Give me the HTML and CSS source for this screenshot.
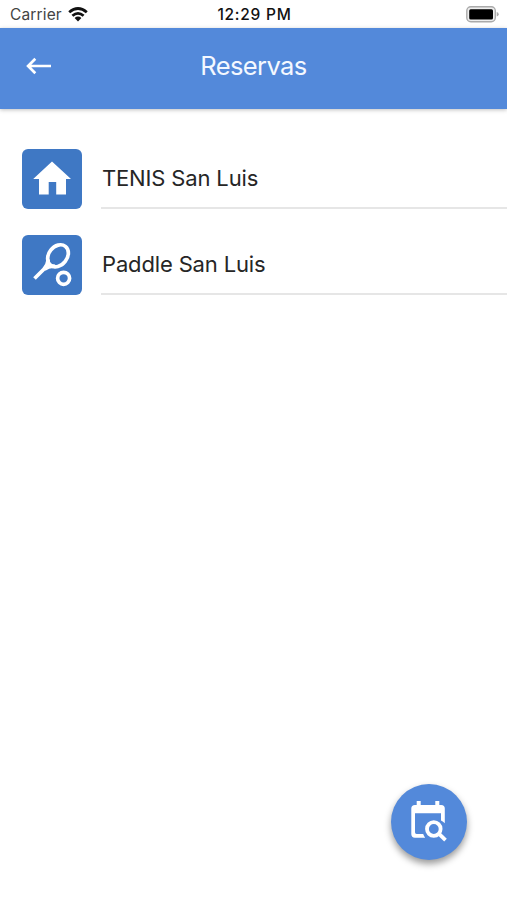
FILE: index.html
```html
<!DOCTYPE html>
<html lang="es">
<head>
<meta charset="utf-8">
<title>Reservas</title>
<link rel="stylesheet" href="styles.css">
</head>
<body>
<div class="screen">
  <div class="status">
    <div class="carrier"><span class="carrier-name">Carrier</span>
      <svg class="wifi" width="20" height="15" viewBox="0 0 20 15"><g fill="none" stroke="#111" stroke-width="2.8"><path d="M1.2 5.3Q10-2.3 18.8 5.3"/><path d="M4.4 8.8Q10 4 15.6 8.8"/></g><path fill="#111" d="M6.6 11Q10 8.2 13.4 11L10 14.4Z"/></svg>
    </div>
    <div class="time">12:29 PM</div>
    <svg class="battery" width="33" height="17" viewBox="0 0 33 17"><rect x=".8" y=".8" width="28.5" height="15" rx="4" fill="#eee" stroke="#aaa" stroke-width="1.4"/><rect x="3.2" y="3.2" width="23.8" height="10.2" rx="1.5" fill="#000"/><path fill="#aaa" d="M30.7 6q2 .5 2 2.3t-2 2.3z"/></svg>
  </div>
  <header class="header">
    <svg class="back" width="26" height="18" viewBox="0 0 26 18" fill="none" stroke="#fff" stroke-width="2.7"><path d="M25 9H2.5M9.3 1.8L2.1 9l7.2 7.2"/></svg>
    <h1 class="title">Reservas</h1>
  </header>
  <main class="list">
    <div class="row">
      <svg class="tile" viewBox="0 0 60 60"><path fill="#fff" d="M30 12.5L49 30h-5v15.5h-9.8V33h-7.5v12.5H17V30h-5.8Z"/></svg>
      <div class="label">TENIS San Luis</div>
    </div>
    <div class="row">
      <svg class="tile" viewBox="0 0 60 60"><g fill="none" stroke="#fff" stroke-width="3.7"><ellipse cx="36" cy="20.8" rx="9.2" ry="12" transform="rotate(38 36 20.8)"/><path d="M26.3 24.5Q25.5 30.5 21.8 34.2L12.5 43.5M33 31.3Q27 30.7 22.3 34.3"/><circle cx="41.6" cy="43.3" r="6"/></g></svg>
      <div class="label">Paddle San Luis</div>
    </div>
  </main>
  <button class="fab" aria-label="Buscar reservas">
    <svg width="76" height="76" viewBox="0 0 76 76"><path fill="#fff" d="M25.7 17h4v4h14.6v-4h4v4h1.9q3.6 0 3.6 3.6v14.7q-1.6-1.8-3.8-2.8v-7.2H24v19q0 1.6 1.6 1.6h6.6q.7 2 2 3.8H24q-3.7 0-3.7-3.7V24.6Q20.3 21 24 21h1.7Z"/><g fill="none" stroke="#fff"><circle cx="42.8" cy="45" r="6.8" stroke-width="3.8"/><path d="M47.3 49.2l7.2 6.9" stroke-width="3.8"/></g></svg>
  </button>
</div>
</body>
</html>
```
FILE: styles.css
```css
* { box-sizing: border-box; }
body { margin: 0; background: #fff; font-family: Inter, "Liberation Sans", sans-serif; color: #262626; }
.screen { height: 900px; display: flex; flex-direction: column; overflow: hidden; }
.status { height: 28px; flex: none; display: grid; grid-template-columns: 1fr auto 1fr; align-items: center; padding: 0 8px 0 10px; }
.carrier { display: flex; align-items: center; gap: 6px; }
.carrier-name { font-size: 15.5px; line-height: 20px; letter-spacing: .15px; color: #444; padding-top: 2px; }
.time { font-size: 15.5px; line-height: 20px; font-weight: 500; padding-top: 2px; letter-spacing: .75px; color: #111; }
.battery { justify-self: end; }
.header { height: 81px; flex: none; display: grid; grid-template-columns: 1fr auto 1fr; align-items: center; padding: 0 26px 5px; background: #5389da; box-shadow: 0 1px 4px rgba(0,0,0,.25); }
.title { margin: 0; font-size: 25.5px; line-height: 32px; font-weight: 400; color: #f4f8ff; letter-spacing: -.6px; }
.list { padding: 40px 0 0 22px; display: flex; flex-direction: column; gap: 26px; flex: 1; }
.row { display: flex; gap: 19px; height: 60px; }
.tile { width: 60px; height: 60px; flex: none; background: #3f78c4; border-radius: 6px; }
.label { flex: 1; display: flex; align-items: center; border-bottom: 2px solid #e6e6e6; font-size: 22px; line-height: 28px; padding-left: 1px; letter-spacing: -.15px; }
.fab { flex: none; align-self: flex-end; width: 76px; height: 76px; margin: 0 40px 40px 0; padding: 0; border: 0; border-radius: 50%; background: #5389da; box-shadow: 0 4px 7px rgba(0,0,0,.4); }
.fab svg { display: block; }
```
